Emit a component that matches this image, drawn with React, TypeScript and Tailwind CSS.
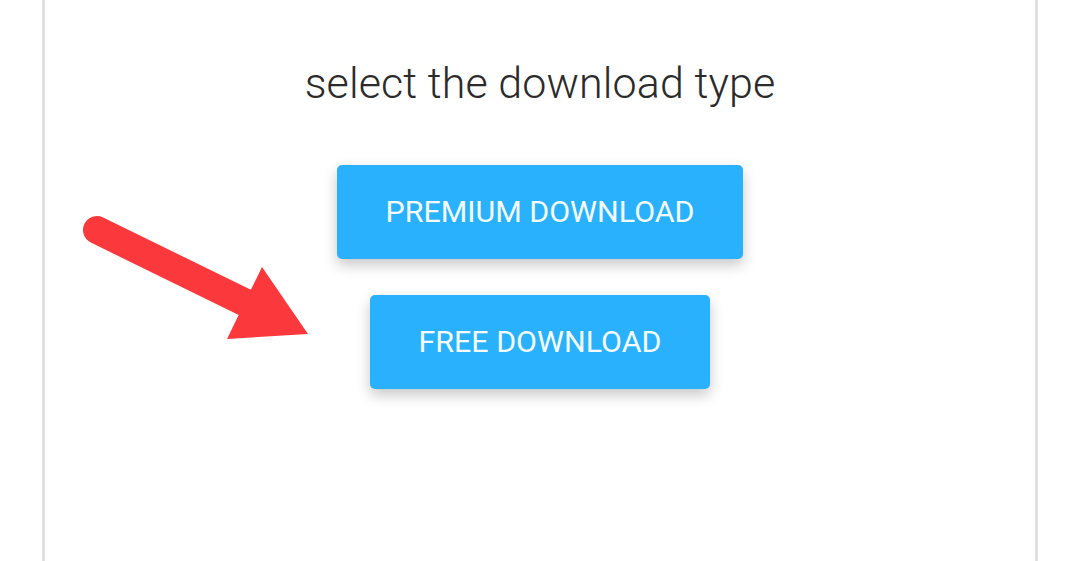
import { useState } from "react";

type Option = {
  id: string;
  label: string;
  width: string;
};

const options: Option[] = [
  { id: "premium", label: "PREMIUM DOWNLOAD", width: "w-[406px]" },
  { id: "free", label: "FREE DOWNLOAD", width: "w-[340px]" },
];

function PointerArrow() {
  return (
    <svg
      className="absolute left-0 top-0 pointer-events-none"
      width="340"
      height="360"
      viewBox="0 0 340 360"
    >
      <line
        x1="97"
        y1="230"
        x2="250"
        y2="305"
        stroke="#fb393d"
        strokeWidth="28"
        strokeLinecap="round"
      />
      <polygon points="262,267 308,334 227,339" fill="#fb393d" />
    </svg>
  );
}

export default function App() {
  const [picked, setPicked] = useState<string | null>(null);

  return (
    <div className="relative h-[561px] w-full bg-white px-[42px] overflow-hidden font-['Roboto',sans-serif]">
      <div className="h-full border-x-[3px] border-[#e1e1e1] flex flex-col items-center">
        <h1 className="mt-[55px] text-[43px] font-light leading-[56px] text-[#2b2b2b] tracking-[0.1px]">
          select the download type
        </h1>
        <div className="mt-[54px] flex flex-col items-center gap-[36px]">
          {options.map((opt) => (
            <button
              key={opt.id}
              onClick={() => setPicked(opt.id)}
              className={`${opt.width} h-[94px] rounded-[5px] bg-[#2ab1fd] text-[#f4fcff] text-[30.4px] leading-none shadow-[0_6px_14px_rgba(0,0,0,0.22)] ${
                picked === opt.id ? "bg-[#1fa2ee]" : ""
              }`}
            >
              {opt.label}
            </button>
          ))}
        </div>
      </div>
      <PointerArrow />
    </div>
  );
}
